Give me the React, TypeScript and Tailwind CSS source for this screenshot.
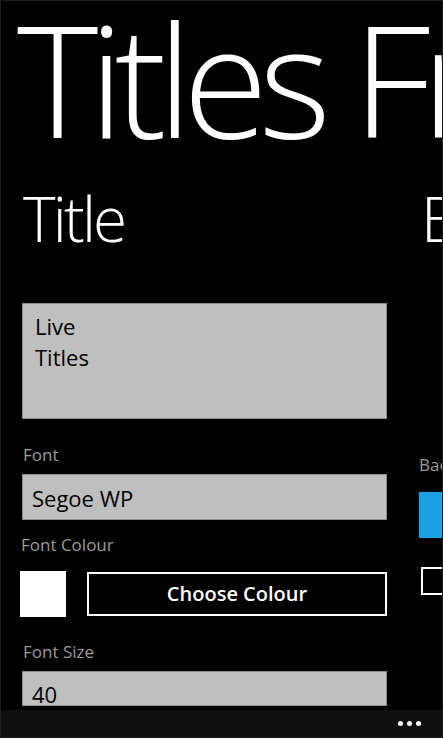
import React from "react";

const font = { fontFamily: '"Open Sans", "Noto Sans", "Liberation Sans", sans-serif' };

function TextBox({ children, h, pt }: { children: React.ReactNode; h: string; pt: string }) {
  return (
    <div className={`${h} ${pt} w-[365px] border border-[#8c8c8c] bg-[#bfbfbf] pl-[9px] text-[22px] leading-[31px] text-black overflow-hidden`}>
      {children}
    </div>
  );
}

export default function App() {
  return (
    <div style={font} className="w-[443px] h-[738px] bg-black border border-[#1c1c1c] flex flex-col overflow-hidden text-white">
      <div className="h-[709px] overflow-hidden">
        <h1 className="whitespace-nowrap text-[155px] leading-none font-light tracking-[-0.06em] pl-[16px] -mt-[1px]">Titles Free</h1>
        <div className="flex gap-[32px] pl-[21px]">
          <div className="w-[365px] shrink-0 flex flex-col">
            <h2 className="text-[62px] leading-none font-light tracking-[-0.045em] mt-[32px] pl-[1px]">Title</h2>
            <div className="mt-[54px] h-[116px] w-[365px] border border-[#8c8c8c] bg-[#bfbfbf] pt-[7px] pl-[12px] text-[22px] leading-[31px] text-black">
              Live
              <br />
              Titles
            </div>
            <div className="mt-[26px] ml-[1px] text-[17px] leading-[20px] text-[#9a9a9a]">Font</div>
            <div className="mt-[9px]">
              <TextBox h="h-[46px]" pt="pt-[8px]">Segoe WP</TextBox>
            </div>
            <div className="mt-[15px] -ml-[1px] text-[17px] leading-[20px] text-[#9a9a9a]">Font Colour</div>
            <div className="mt-[16px] -ml-[2px] flex items-center gap-[21px]">
              <div className="w-[46px] h-[46px] bg-white" />
              <button className="w-[300px] h-[44px] border-2 border-white flex items-center justify-center text-[20px] font-semibold text-white">
                Choose Colour
              </button>
            </div>
            <div className="mt-[25px] ml-[1px] text-[17px] leading-[20px] text-[#9a9a9a]">Font Size</div>
            <div className="mt-[9px]">
              <TextBox h="h-[35px]" pt="pt-[7px]">40</TextBox>
            </div>
          </div>
          <div className="w-[300px] shrink-0 flex flex-col">
            <h2 className="text-[62px] leading-none font-light tracking-[-0.045em] mt-[32px] pl-[2px] whitespace-nowrap">Background</h2>
            <div className="mt-[206px] text-[17px] leading-[20px] text-[#9a9a9a] whitespace-nowrap">Background Colour</div>
            <div className="mt-[17px] w-[200px] h-[46px] bg-[#1ba1e2]" />
            <div className="mt-[29px] ml-[2px] w-[28px] h-[28px] border-2 border-white" />
          </div>
        </div>
      </div>
      <div className="h-[27px] bg-[#0f0f0f] flex items-center justify-end gap-[4px] pr-[21px]">
        <span className="w-[5px] h-[5px] rounded-full bg-white" />
        <span className="w-[5px] h-[5px] rounded-full bg-white" />
        <span className="w-[5px] h-[5px] rounded-full bg-white" />
      </div>
    </div>
  );
}
